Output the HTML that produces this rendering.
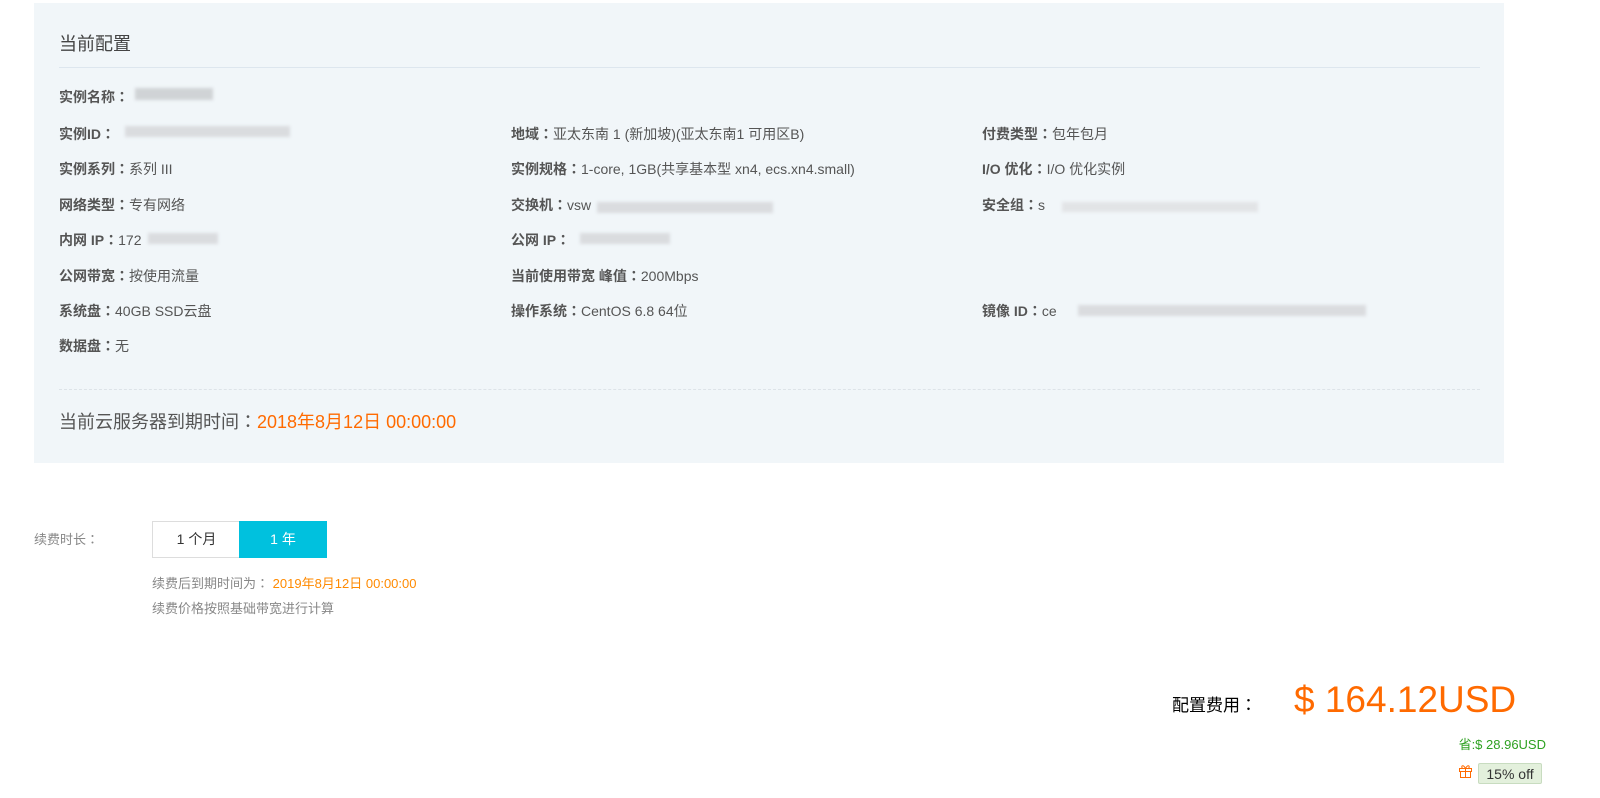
<!DOCTYPE html>
<html><head><meta charset="utf-8"><style>
body{margin:0;width:1600px;height:798px;background:#fff;font-family:"Liberation Sans","Noto Sans CJK SC",sans-serif;position:relative;overflow:hidden}
.a{position:absolute;white-space:nowrap}
.panel{position:absolute;left:34px;top:3px;width:1470px;height:460px;background:#f1f6f9}
.r{font-size:14px;color:#555;line-height:20px}
.r b{color:#555;font-weight:bold}
.c{font-family:"Noto Sans CJK JP",sans-serif}
.blur{position:absolute;background:#d0d3d6;filter:blur(1.5px)}
</style></head><body>
<div class="panel"></div>
<div class="a" style="left:59px;top:30px;font-size:18px;color:#444">当前配置</div>
<div class="a" style="left:59px;top:67px;width:1421px;height:1px;background:#dde6ee"></div>

<div class="a r" style="left:59px;top:87px"><b>实例名称<span class="c">：</span></b></div>
<div class="blur" style="left:135px;top:88px;width:78px;height:12px"></div>

<div class="a r" style="left:59px;top:124px"><b>实例ID<span class="c">：</span></b></div>
<div class="blur" style="left:125px;top:126px;width:165px;height:11px;background:#dadcdf"></div>
<div class="a r" style="left:511px;top:124px"><b>地域<span class="c">：</span></b>亚太东南 1 (新加坡)(亚太东南1 可用区B)</div>
<div class="a r" style="left:982px;top:124px"><b>付费类型<span class="c">：</span></b>包年包月</div>

<div class="a r" style="left:59px;top:159px"><b>实例系列<span class="c">：</span></b>系列 III</div>
<div class="a r" style="left:511px;top:159px"><b>实例规格<span class="c">：</span></b>1-core, 1GB(共享基本型 xn4, ecs.xn4.small)</div>
<div class="a r" style="left:982px;top:159px"><b>I/O 优化<span class="c">：</span></b>I/O 优化实例</div>

<div class="a r" style="left:59px;top:195px"><b>网络类型<span class="c">：</span></b>专有网络</div>
<div class="a r" style="left:511px;top:195px"><b>交换机<span class="c">：</span></b>vsw</div>
<div class="blur" style="left:597px;top:202px;width:176px;height:11px;background:#dadcdf"></div>
<div class="a r" style="left:982px;top:195px"><b>安全组<span class="c">：</span></b>s</div>
<div class="blur" style="left:1062px;top:202px;width:196px;height:10px;background:#e2e4e6"></div>

<div class="a r" style="left:59px;top:230px"><b>内网 IP<span class="c">：</span></b>172</div>
<div class="blur" style="left:148px;top:233px;width:70px;height:11px;background:#dadcdf"></div>
<div class="a r" style="left:511px;top:230px"><b>公网 IP<span class="c">：</span></b></div>
<div class="blur" style="left:580px;top:233px;width:90px;height:11px;background:#dadcdf"></div>

<div class="a r" style="left:59px;top:266px"><b>公网带宽<span class="c">：</span></b>按使用流量</div>
<div class="a r" style="left:511px;top:266px"><b>当前使用带宽 峰值<span class="c">：</span></b>200Mbps</div>

<div class="a r" style="left:59px;top:301px"><b>系统盘<span class="c">：</span></b>40GB SSD云盘</div>
<div class="a r" style="left:511px;top:301px"><b>操作系统<span class="c">：</span></b>CentOS 6.8 64位</div>
<div class="a r" style="left:982px;top:301px"><b>镜像 ID<span class="c">：</span></b>ce</div>
<div class="blur" style="left:1078px;top:305px;width:288px;height:11px;background:#dadcdf"></div>

<div class="a r" style="left:59px;top:336px"><b>数据盘<span class="c">：</span></b>无</div>

<div class="a" style="left:59px;top:389px;width:1421px;border-top:1px dashed #dde3e8"></div>
<div class="a" style="left:59px;top:408px;font-size:18px;color:#555">当前云服务器到期时间<span class="c">：</span><span style="color:#ff6a00">2018年8月12日 00:00:00</span></div>

<div class="a" style="left:34px;top:529px;font-size:13px;color:#888">续费时长<span class="c">：</span></div>
<div class="a" style="left:152px;top:521px;width:87px;height:35px;border:1px solid #ddd;border-right:none;background:#fff;font-size:14px;color:#333;text-align:center;line-height:35px">1 个月</div>
<div class="a" style="left:239px;top:521px;width:88px;height:37px;background:#00c1de;font-size:14px;color:#fff;text-align:center;line-height:37px">1 年</div>
<div class="a" style="left:152px;top:573px;font-size:13px;color:#888">续费后到期时间为<span class="c">：</span> <span style="color:#ff8a00">2019年8月12日 00:00:00</span></div>
<div class="a" style="left:152px;top:598px;font-size:13px;color:#888">续费价格按照基础带宽进行计算</div>

<div class="a" style="left:1172px;top:691px;font-size:17px;color:#000">配置费用<span class="c">：</span></div>
<div class="a" style="left:1294px;top:679px;font-size:37px;color:#ff6a00">$ 164.12USD</div>
<div class="a" style="right:54px;top:734px;font-size:13px;color:#2ea121">省:$ 28.96USD</div>
<svg class="a" style="left:1458px;top:763px" width="15" height="15" viewBox="0 0 15 15" fill="none" stroke="#ff6a00" stroke-width="1"><rect x="1.5" y="5.5" width="12" height="3"/><rect x="2.5" y="8.5" width="10" height="6"/><line x1="7.5" y1="5.5" x2="7.5" y2="14.5"/><path d="M7.5 5.5C5 1 2.5 3 4.5 5.5M7.5 5.5C10 1 12.5 3 10.5 5.5"/></svg>
<div class="a" style="left:1478px;top:763px;width:62px;height:19px;background:#e3f0dc;border:1px solid #c8dcc0;border-radius:2px;font-size:14px;color:#333;text-align:center;line-height:20px">15% off</div>
</body></html>
